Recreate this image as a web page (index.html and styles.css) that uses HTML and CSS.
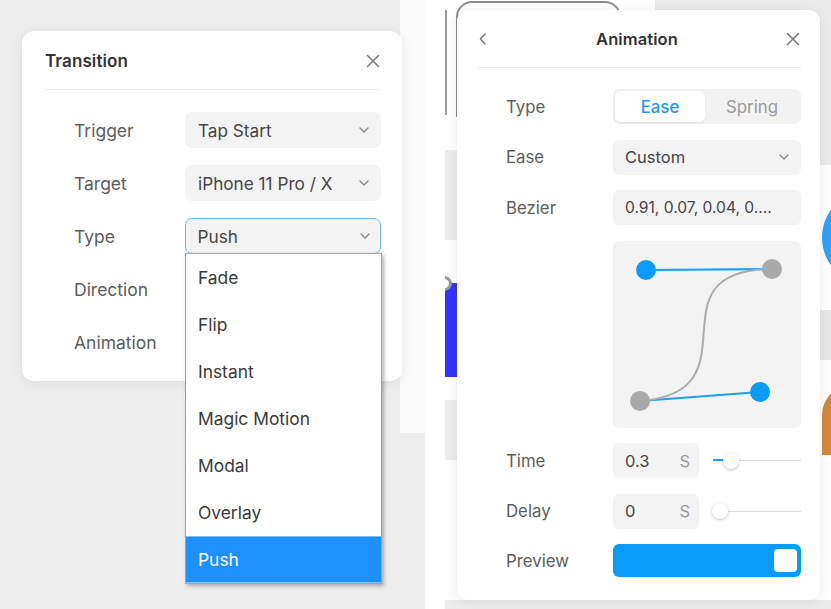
FILE: index.html
```html
<!DOCTYPE html>
<html lang="en">
<head>
<meta charset="utf-8">
<title>Transition / Animation</title>
<link rel="stylesheet" href="styles.css">
</head>
<body>
<div class="stage">
  <section class="shot shot-left">
    <div class="deco strip-white"></div>
    <div class="panel transition">
      <header class="panel-head">
        <h2 class="title">Transition</h2>
        <svg class="icon-close" width="14" height="14" viewBox="0 0 14 14"><path d="M1.5 1.5 L12.5 12.5 M12.5 1.5 L1.5 12.5"/></svg>
      </header>
      <div class="form form-left">
        <span class="label">Trigger</span>
        <div class="select"><span>Tap Start</span><svg class="chev" width="10" height="6" viewBox="0 0 10 6"><path d="M1 1 L5 5 L9 1"/></svg></div>
        <span class="label">Target</span>
        <div class="select"><span>iPhone 11 Pro / X</span><svg class="chev" width="10" height="6" viewBox="0 0 10 6"><path d="M1 1 L5 5 L9 1"/></svg></div>
        <span class="label">Type</span>
        <div class="select focused"><span>Push</span><svg class="chev" width="10" height="6" viewBox="0 0 10 6"><path d="M1 1 L5 5 L9 1"/></svg></div>
        <span class="label">Direction</span>
        <div class="select"><span></span></div>
        <span class="label">Animation</span>
        <div class="select"><span></span></div>
      </div>
    </div>
    <ul class="dropdown">
      <li>Fade</li>
      <li>Flip</li>
      <li>Instant</li>
      <li>Magic Motion</li>
      <li>Modal</li>
      <li>Overlay</li>
      <li class="active">Push</li>
    </ul>
  </section>

  <div class="gutter"></div>

  <section class="shot shot-right">
    <div class="deco top-gray"></div>
    <div class="deco phone-frame"></div>
    <div class="deco line-a"></div>
    <div class="deco band-a"></div>
    <div class="deco blue-rect"></div>
    <div class="deco ring"></div>
    <div class="deco band-b"></div>
    <div class="deco right-gray"></div>
    <div class="deco blue-blob"></div>
    <div class="deco right-gray2"></div>
    <div class="deco orange-blob"></div>
    <div class="deco bottom-band"></div>

    <div class="panel animation">
      <header class="panel-head head-center">
        <svg class="icon-back" width="10" height="14" viewBox="0 0 10 14"><path d="M7 2 L2.5 7 L7 12"/></svg>
        <h2 class="title">Animation</h2>
        <svg class="icon-close" width="14" height="14" viewBox="0 0 14 14"><path d="M1.5 1.5 L12.5 12.5 M12.5 1.5 L1.5 12.5"/></svg>
      </header>
      <div class="form form-right">
        <span class="label">Type</span>
        <div class="segmented">
          <span class="seg seg-on">Ease</span>
          <span class="seg">Spring</span>
        </div>

        <span class="label">Ease</span>
        <div class="select"><span>Custom</span><svg class="chev" width="10" height="6" viewBox="0 0 10 6"><path d="M1 1 L5 5 L9 1"/></svg></div>

        <span class="label">Bezier</span>
        <div class="select"><span class="bez-val">0.91, 0.07, 0.04, 0....</span></div>

        <span class="label"></span>
        <div class="curve">
          <svg width="188" height="187" viewBox="0 0 188 187">
            <path class="handle" d="M33 29 L159 28"/>
            <path class="handle" d="M27 160 L147 151"/>
            <path class="bez" d="M27 160 C147 151 33 29 159 28"/>
            <circle class="pt-blue" cx="33" cy="29" r="10"/>
            <circle class="pt-gray" cx="159" cy="28" r="10"/>
            <circle class="pt-gray" cx="27" cy="160" r="10"/>
            <circle class="pt-blue" cx="147" cy="151" r="10"/>
          </svg>
        </div>

        <span class="label">Time</span>
        <div class="num-row">
          <div class="num"><span>0.3</span><span class="unit">S</span></div>
          <div class="slider"><div class="track"></div><div class="fill" style="width:12px"></div><div class="knob" style="left:10px"></div></div>
        </div>

        <span class="label">Delay</span>
        <div class="num-row">
          <div class="num"><span>0</span><span class="unit">S</span></div>
          <div class="slider"><div class="track"></div><div class="knob" style="left:-1px"></div></div>
        </div>

        <span class="label">Preview</span>
        <div class="preview"><div class="preview-box"></div></div>
      </div>
    </div>
  </section>
</div>
</body>
</html>
```

FILE: styles.css
```css
* { box-sizing: border-box; }
html, body { margin: 0; padding: 0; }
body {
  width: 831px;
  height: 609px;
  overflow: hidden;
  background: #ffffff;
  font-family: Inter, "Noto Sans", "Liberation Sans", sans-serif;
  color: #444;
}
.stage {
  display: flex;
  width: 831px;
  height: 609px;
}
.shot {
  position: relative;
  height: 609px;
  overflow: hidden;
}
.shot-left {
  width: 425px;
  background: #eeeeee;
  padding: 31px 0 0 22px;
}
.gutter { width: 20px; background: #fff; }
.shot-right {
  width: 386px;
  background: #ffffff;
  padding: 10px 0 0 12px;
}
.deco { position: absolute; }

/* left decorations */
.strip-white { left: 400px; top: 0; width: 25px; height: 433px; background: #fafafa; }

/* panels */
.panel {
  position: relative;
  background: #fff;
  border-radius: 12px;
  box-shadow: 0 2px 14px rgba(0,0,0,0.08), 0 0 2px rgba(0,0,0,0.04);
}
.transition {
  width: 380px;
  height: 350px;
  padding: 0 21px 0 23px;
}
.animation {
  width: 363px;
  height: 590px;
  padding: 0 19px 0 21px;
  border-radius: 11px;
}
.panel-head {
  display: flex;
  align-items: center;
  justify-content: space-between;
  height: 59px;
  border-bottom: 1px solid #ececec;
}
.transition .panel-head { padding-top: 1px; }
.animation .panel-head { height: 58px; }
.title {
  margin: 0;
  font-size: 17px;
  font-weight: 600;
  color: #333;
  letter-spacing: 0.1px;
}
.animation .title { font-size: 16.5px; }
.icon-close path, .icon-back path {
  fill: none;
  stroke: #777;
  stroke-width: 1.5;
  stroke-linecap: round;
}
.icon-close { margin-right: 1px; }
.head-center .title { flex: 1; text-align: center; }

/* forms */
.form {
  display: grid;
  align-items: center;
}
.form-left {
  grid-template-columns: 111px 196px;
  grid-auto-rows: 36px;
  row-gap: 17px;
  padding: 22px 0 0 29px;
}
.form-right {
  grid-template-columns: 107px 188px;
  grid-template-rows: 35px 35px 35px 187px 35px 35px 33px;
  row-gap: 15.5px;
  padding: 21px 0 0 28px;
}
.label {
  font-size: 17.5px;
  color: #5c5c5c;
}
.form-right .label { font-size: 16.8px; }
.select {
  height: 100%;
  display: flex;
  align-items: center;
  justify-content: space-between;
  background: #f3f3f3;
  border-radius: 7px;
  padding: 0 12px 0 13px;
  font-size: 17.2px;
  color: #454545;
}
.form-right .select { padding-left: 12px; border-radius: 6px; font-size: 16.5px; }
.form-right .select .bez-val { font-size: 15.6px; }
.select.focused {
  border: 1.5px solid #66b9f5;
  padding-left: 11.5px;
  padding-right: 10.5px;
  box-shadow: 0 1px 0 #fff;
}
.chev path {
  fill: none;
  stroke: #888;
  stroke-width: 1.4;
  stroke-linecap: round;
  stroke-linejoin: round;
}

/* dropdown */
.dropdown {
  position: absolute;
  left: 185px;
  top: 253px;
  width: 197px;
  margin: 0;
  padding: 0;
  list-style: none;
  background: #fff;
  border: 1px solid #a4a4a4;
  box-shadow: 2px 2px 4px rgba(0,0,0,0.3);
}
.dropdown li {
  height: 47px;
  display: flex;
  align-items: center;
  padding-left: 12px;
  font-size: 17.4px;
  color: #3a3a3a;
}
.dropdown li.active {
  background: #1e8fff;
  color: #fff;
  border-top: 1px solid #7cc0ff;
  border-bottom: 1px solid #7cc0ff;
}

/* segmented */
.segmented {
  height: 100%;
  display: flex;
  background: #f2f2f2;
  border-radius: 6px;
  padding: 2px;
}
.seg {
  flex: 1;
  display: flex;
  align-items: center;
  justify-content: center;
  font-size: 16.8px;
  color: #9a9a9a;
  border-radius: 5px;
}
.seg-on {
  flex: 0 0 90px;
  background: #fff;
  color: #1c9bf3;
  font-weight: 500;
  box-shadow: 0 1px 2px rgba(0,0,0,0.08);
}

/* curve */
.curve {
  height: 100%;
  background: #f3f3f3;
  border-radius: 6px;
}
.curve svg { display: block; }
.handle { stroke: #1aa0f5; stroke-width: 2.2; fill: none; }
.bez { stroke: #ababab; stroke-width: 2; fill: none; }
.pt-blue { fill: #0a9bfa; }
.pt-gray { fill: #a9a9a9; }

/* number rows */
.num-row {
  height: 100%;
  display: flex;
  align-items: center;
}
.num {
  width: 86px;
  height: 100%;
  display: flex;
  align-items: center;
  justify-content: space-between;
  background: #f3f3f3;
  border-radius: 6px;
  padding: 0 9px 0 12px;
  font-size: 16.5px;
  color: #454545;
}
.unit { color: #9a9a9a; }
.slider {
  position: relative;
  flex: 1;
  margin-left: 14px;
  height: 16px;
}
.track {
  position: absolute;
  left: 0; right: 0; top: 7.5px;
  height: 1px;
  background: #dcdcdc;
}
.fill {
  position: absolute;
  left: 0; top: 6.5px;
  height: 2px;
  background: #1a9cf5;
}
.knob {
  position: absolute;
  top: 0;
  width: 16px;
  height: 16px;
  border-radius: 50%;
  background: #fff;
  box-shadow: 0 1px 3px rgba(0,0,0,0.25);
}

/* preview */
.preview {
  height: 100%;
  background: #0a9bf8;
  border-radius: 6px;
  display: flex;
  align-items: center;
  justify-content: flex-end;
  padding-right: 4px;
}
.preview-box {
  width: 23px;
  height: 23px;
  background: #fff;
  border-radius: 4px;
}

/* right decorations */
.top-gray { left: 210px; top: 0; width: 176px; height: 30px; background: #ebebeb; }
.phone-frame {
  left: 11px; top: 1px; width: 165px; height: 116px;
  border: 2px solid #8c8c8c;
  border-bottom: none;
  border-radius: 16px 16px 0 0;
}
.line-a { left: 0; top: 10px; width: 2px; height: 105px; background: #9a9a9a; }
.band-a { left: 0; top: 150px; width: 12px; height: 90px; background: #ececec; }
.blue-rect { left: 0; top: 283px; width: 12px; height: 94px; background: #3434ff; }
.ring { left: -8px; top: 276px; width: 15px; height: 15px; border-radius: 50%; border: 3px solid #9a9a9a; background: #fff; }
.band-b { left: 0; top: 400px; width: 12px; height: 60px; background: #ededed; }
.right-gray { left: 375px; top: 0; width: 11px; height: 165px; background: #ebebeb; }
.blue-blob { left: 377px; top: 190px; width: 60px; height: 95px; border-radius: 48px 0 0 48px / 48px 0 0 48px; background: #2ea3fb; }
.right-gray2 { left: 375px; top: 310px; width: 11px; height: 50px; background: #e8e8e8; }
.orange-blob { left: 377px; top: 385px; width: 40px; height: 70px; border-radius: 30px 0 0 0; background: #d4893a; }
.bottom-band { left: 0; top: 600px; width: 386px; height: 9px; background: #ececec; }
```
